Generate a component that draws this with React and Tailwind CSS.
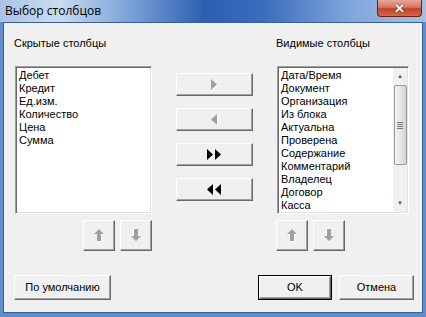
const font = { fontFamily: '"Liberation Sans", Arial, sans-serif' };

const hidden = ["Дебет", "Кредит", "Ед.изм.", "Количество", "Цена", "Сумма"];
const visible = [
  "Дата/Время",
  "Документ",
  "Организация",
  "Из блока",
  "Актуальна",
  "Проверена",
  "Содержание",
  "Комментарий",
  "Владелец",
  "Договор",
  "Касса",
  "Контрагент",
];

// classic raised win button
const Btn = ({ className = "", children, def }) => (
  <div
    className={`flex items-center justify-center bg-[#f0f0f0] ${
      def ? "border border-[#000]" : ""
    } ${className}`}
  >
    <div className="w-full h-full flex items-center justify-center gap-[1px] border-t border-l border-t-white border-l-white border-r border-b border-r-[#696969] border-b-[#696969] shadow-[inset_-1px_-1px_0_#a0a0a0]">
      {children}
    </div>
  </div>
);

const Tri = ({ dir, dark }) => {
  const fill = dark ? "#000" : "#a0a0a0";
  const pts = dir === "r" ? "0,0 6,5.5 0,11" : "6,0 0,5.5 6,11";
  return (
    <svg width="7" height="12" viewBox="0 0 7 12">
      {!dark && (
        <polygon points={pts} fill="#fff" transform="translate(1,1)" />
      )}
      <polygon points={pts} fill={fill} />
    </svg>
  );
};

const Arrow = ({ up }) => (
  <svg width="11" height="15" viewBox="0 0 11 15">
    <g transform={up ? "" : "rotate(180 5 7)"}>
      <polygon points="5,1 10,6 7,6 7,13 3,13 3,6 0,6" fill="#fff" transform="translate(1,1)" />
      <polygon points="5,1 10,6 7,6 7,13 3,13 3,6 0,6" fill="#a0a0a0" />
    </g>
  </svg>
);

const ListBox = ({ items, scroll, className }) => (
  <div
    className={`bg-white border border-t-[#a0a0a0] border-l-[#a0a0a0] border-r-[#fff] border-b-[#fff] shadow-[inset_1px_1px_0_#696969,inset_-1px_-1px_0_#e3e3e3] flex overflow-hidden ${className}`}
  >
    <div className="flex-1 pl-[3px] pt-[2px] text-[11px] leading-[13px] text-black overflow-hidden">
      {items.map((t) => (
        <div key={t} className="whitespace-nowrap">
          {t}
        </div>
      ))}
    </div>
    {scroll && (
      <div className="w-[14px] my-[1px] mr-[1px] bg-[#f0f0f0] flex flex-col items-center">
        <div className="h-[17px] flex items-center justify-center text-[#555] text-[6px]">▲</div>
        <div className="w-[13px] h-[80px] rounded-[2px] border border-[#989898] bg-gradient-to-r from-[#f3f3f3] via-[#e6e6e6] to-[#d2d2d2] flex flex-col items-center justify-center gap-[1px]">
          <div className="w-[6px] h-[1px] bg-[#777]" />
          <div className="w-[6px] h-[1px] bg-[#777]" />
          <div className="w-[6px] h-[1px] bg-[#777]" />
          <div className="w-[6px] h-[1px] bg-[#777]" />
        </div>
        <div className="flex-1" />
        <div className="h-[17px] flex items-center justify-center text-[#555] text-[6px]">▼</div>
      </div>
    )}
  </div>
);

export default function App() {
  return (
    <div
      className="w-[426px] h-[317px] bg-[#5f8ccb] flex flex-col overflow-hidden"
      style={font}
    >
      {/* title bar */}
      <div className="relative h-[22px] shrink-0 bg-[linear-gradient(90deg,#a9c3e6_0%,#c9dbf1_14%,#7da2d8_30%,#2c5fb0_48%,#3b6dbd_62%,#7fa5db_82%,#a4c0e6_100%)]">
        <div className="pl-[5px] pt-[3px] text-[12px] leading-[15px] text-black" style={{ fontFamily: '"Open Sans", "Liberation Sans", sans-serif' }}>
          Выбор столбцов
        </div>
        <div className="absolute left-[377px] top-0 w-[45px] h-[17px] rounded-b-[4px] border border-t-0 border-[#6d2116] bg-[linear-gradient(180deg,#e9a897_0%,#d77660_45%,#c2432a_55%,#d2694a_100%)] flex items-center justify-center">
          <span className="text-white text-[13px] font-bold leading-none [text-shadow:0_0_1px_#4a1a10,0_0_1px_#4a1a10]">✕</span>
        </div>
      </div>

      {/* client */}
      <div className="mx-[3px] mb-[4px] flex-1 bg-[#f0f0f0] border border-[#3a5f93] flex flex-col pl-[10px] pt-[14px]">
        <div className="flex">
          {/* left column */}
          <div className="w-[138px] flex flex-col">
            <div className="text-[11px] leading-[13px] h-[13px] text-black">Скрытые столбцы</div>
            <ListBox items={hidden} className="mt-[16px] ml-[1px] w-[137px] h-[148px]" />
            <div className="flex justify-end gap-[5px] mt-[6px]">
              <Btn className="w-[32px] h-[31px]"><Arrow up /></Btn>
              <Btn className="w-[32px] h-[31px]"><Arrow /></Btn>
            </div>
          </div>

          {/* middle */}
          <div className="ml-[24px] w-[77px] pt-[36px] flex flex-col gap-[12px]">
            <Btn className="h-[23px]"><Tri dir="r" /></Btn>
            <Btn className="h-[23px]"><Tri dir="l" /></Btn>
            <Btn className="h-[23px]"><Tri dir="r" dark /><Tri dir="r" dark /></Btn>
            <Btn className="h-[23px]"><Tri dir="l" dark /><Tri dir="l" dark /></Btn>
          </div>

          {/* right */}
          <div className="ml-[23px] w-[133px] flex flex-col">
            <div className="text-[11px] leading-[13px] h-[13px] text-black">Видимые столбцы</div>
            <ListBox items={visible} scroll className="mt-[16px] ml-[1px] w-[132px] h-[148px]" />
            <div className="flex gap-[5px] mt-[6px]">
              <Btn className="w-[32px] h-[31px]"><Arrow up /></Btn>
              <Btn className="w-[32px] h-[31px]"><Arrow /></Btn>
            </div>
          </div>
        </div>

        {/* bottom buttons */}
        <div className="flex mt-[24px] text-[11px] text-black">
          <Btn className="w-[97px] h-[25px]">По умолчанию</Btn>
          <Btn def className="ml-[147px] w-[74px] h-[25px]">OK</Btn>
          <Btn className="ml-[7px] w-[75px] h-[25px]">Отмена</Btn>
        </div>
      </div>
    </div>
  );
}
